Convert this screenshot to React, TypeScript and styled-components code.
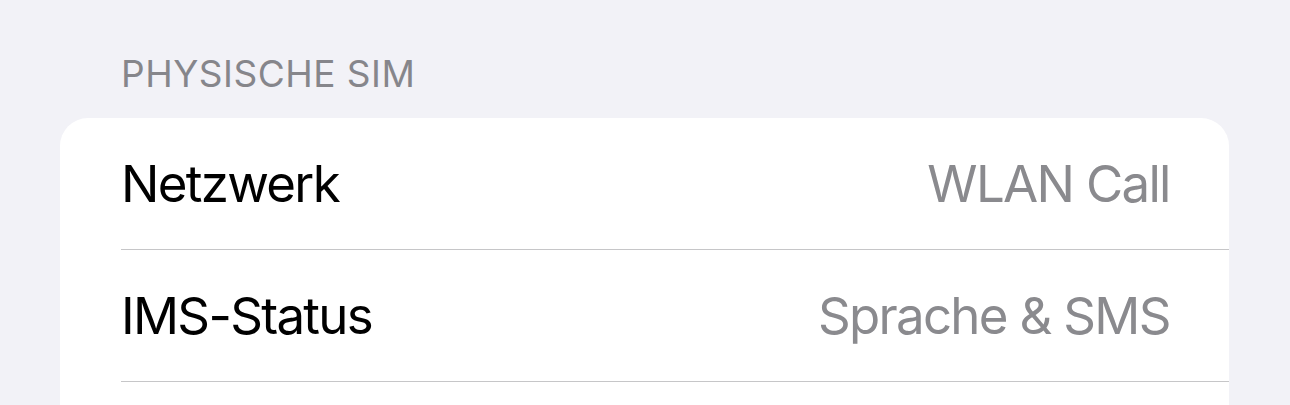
import React from "react";
import styled, { createGlobalStyle } from "styled-components";

const Global = createGlobalStyle`
  html, body { margin: 0; padding: 0; background: #f2f2f7; }
  body { font-family: Inter, "Liberation Sans", sans-serif; -webkit-font-smoothing: antialiased; }
`;

const Page = styled.div`
  height: 405px;
  overflow: hidden;
  padding: 50px 61px 0 60px;
  box-sizing: border-box;
`;

const SectionHeader = styled.div`
  padding-left: 61px;
  font-size: 37px;
  line-height: 48px;
  letter-spacing: 0.5px;
  color: #86868b;
  text-transform: uppercase;
  margin-bottom: 20px;
`;

const Card = styled.div`
  background: #ffffff;
  border-radius: 28px;
  padding-left: 61px;
  overflow: hidden;
`;

const Row = styled.div`
  display: flex;
  align-items: center;
  justify-content: space-between;
  height: 131px;
  padding-right: 61px;
  border-bottom: 1px solid #c6c6c8;
`;

const Label = styled.span`
  font-size: 51px;
  letter-spacing: -1.7px;
  color: #000000;
`;

const Value = styled.span`
  font-size: 51px;
  letter-spacing: -1.7px;
  margin-right: -1.7px;
  color: #8a8a8e;
`;

const rows = [
  { label: "Netzwerk", value: "WLAN Call" },
  { label: "IMS-Status", value: "Sprache & SMS" },
  { label: "", value: "" },
];

export default function App() {
  return (
    <>
      <Global />
      <Page>
        <SectionHeader>Physische SIM</SectionHeader>
        <Card>
          {rows.map((r, i) => (
            <Row key={i}>
              <Label>{r.label}</Label>
              <Value>{r.value}</Value>
            </Row>
          ))}
        </Card>
      </Page>
    </>
  );
}
